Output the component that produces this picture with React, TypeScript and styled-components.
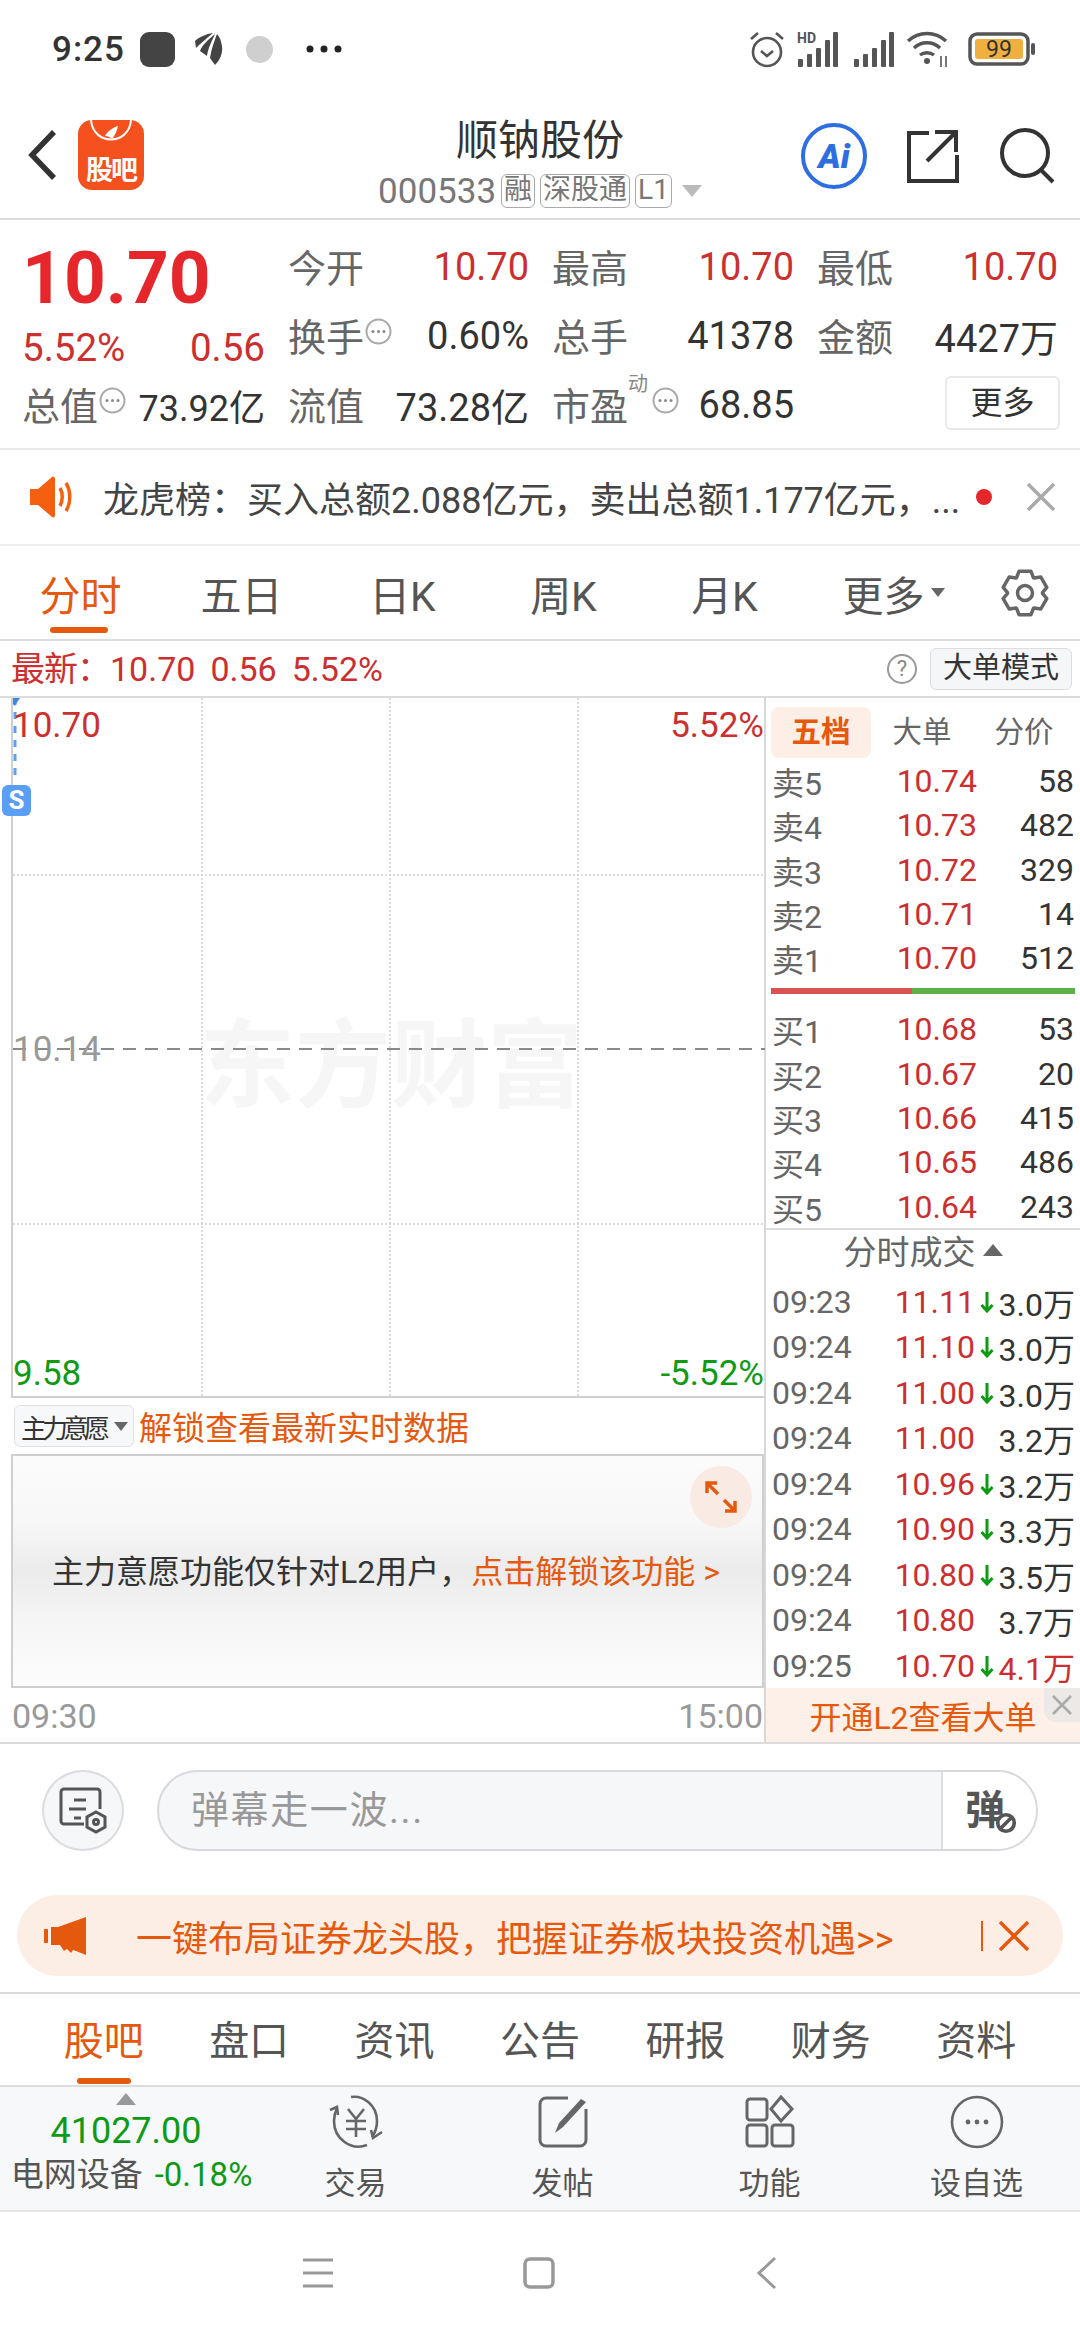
import React from 'react';
import styled, { createGlobalStyle } from 'styled-components';

const RED = '#cc2f2f';
const GREEN = '#0f9a14';
const ORANGE = '#e5590f';
const LINE = '#dcdcdc';

const GlobalStyle = createGlobalStyle`
  html, body {
    margin: 0;
    padding: 0;
    background: #fff;
  }
  * {
    box-sizing: border-box;
  }
  body {
    font-family: Roboto, "Noto Sans CJK SC", sans-serif;
    color: #333;
  }
`;

const Page = styled.div`
  width: 1080px;
  height: 2340px;
  overflow: hidden;
  background: #fff;
`;

/* status bar */
const StatusBar = styled.div`
  height: 96px;
  padding: 2px 44px 0 52px;
  display: flex;
  align-items: center;
  justify-content: space-between;
`;

const StatusLeft = styled.div`
  display: flex;
  align-items: center;
`;

const StatusTime = styled.span`
  font-size: 35px;
  font-weight: 500;
  letter-spacing: 1px;
  color: #333;
  width: 88px;
`;

const AppDot = styled.span`
  width: 35px;
  height: 35px;
  border-radius: 9px;
  background: #444;
  margin-right: 20px;
`;

const GreyDot = styled.span`
  width: 27px;
  height: 27px;
  border-radius: 50%;
  background: #cfcfcf;
  margin: 0 33px 0 23px;
`;

const StatusRight = styled.div`
  display: flex;
  align-items: center;
  gap: 14px;
`;

const AlarmIcon = styled.svg`
  margin-right: -3px;
`;

const WifiIcon = styled.svg`
  margin: 0 4px 0 -3px;
`;

/* navigation */
const NavBar = styled.div`
  height: 124px;
  padding: 14px 24px 0 28px;
  border-bottom: 2px solid ${LINE};
  display: flex;
  align-items: flex-start;
`;

const NavLeft = styled.div`
  width: 270px;
  padding-top: 10px;
  display: flex;
  align-items: center;
  gap: 22px;
`;

const LogoBox = styled.div`
  width: 66px;
  height: 70px;
  border-radius: 14px;
  background: #f4511e;
  color: #fff;
  display: flex;
  flex-direction: column;
  align-items: center;
  justify-content: flex-end;
  position: relative;
  overflow: hidden;
  font-size: 27px;
  line-height: 38px;
  font-weight: 700;
  letter-spacing: -2px;
`;

const LogoArc = styled.svg`
  position: absolute;
  top: 0;
  left: 0;
`;

const NavCenter = styled.div`
  flex: 1;
  display: flex;
  flex-direction: column;
  align-items: center;
  margin-left: -19px;
`;

const Title = styled.div`
  font-size: 42px;
  line-height: 62px;
  color: #333;
`;

const SubTitle = styled.div`
  display: flex;
  align-items: center;
  gap: 5px;
  height: 38px;
  font-size: 35px;
  color: #777;
`;

const Badge = styled.span`
  height: 34px;
  padding: 0 2px;
  border: 1.5px solid #aaa;
  border-radius: 6px;
  font-size: 28px;
  line-height: 30px;
  color: #777;
`;

const Triangle = styled.span<{ $up?: boolean; $size?: number; $color?: string; $gap?: number }>`
  display: inline-block;
  width: 0;
  height: 0;
  margin-left: ${(p) => p.$gap ?? 0}px;
  border-left: ${(p) => p.$size ?? 10}px solid transparent;
  border-right: ${(p) => p.$size ?? 10}px solid transparent;
  ${(p) => (p.$up ? 'border-bottom' : 'border-top')}: ${(p) => (p.$size ?? 10) + 2}px solid ${(p) => p.$color ?? '#bbb'};
`;

const NavRight = styled.div`
  display: flex;
  align-items: center;
  gap: 40px;
  padding-top: 13px;
  padding-right: 1px;
`;

const AiBadge = styled.div`
  width: 66px;
  height: 66px;
  border-radius: 50%;
  border: 4px solid #2d6ee0;
  color: #2d6ee0;
  font-size: 34px;
  font-weight: 900;
  font-style: italic;
  display: flex;
  align-items: center;
  justify-content: center;
`;

/* quote */
const Quote = styled.div`
  height: 230px;
  padding: 12px 23px 0 22px;
  border-bottom: 2px solid #eaeaea;
  display: grid;
  grid-template-columns: 243px 241px 242px 241px;
  grid-auto-rows: 69px;
  column-gap: 23px;
`;

const PriceBlock = styled.div`
  grid-row: span 2;
  display: flex;
  flex-direction: column;
`;

const BigPrice = styled.div`
  font-size: 73px;
  line-height: 92px;
  font-weight: 700;
  color: #e5262b;
`;

const PriceSub = styled.div`
  display: flex;
  justify-content: space-between;
  font-size: 38.5px;
  line-height: 44px;
  margin-top: 2px;
  color: ${RED};
`;

const Cell = styled.div`
  display: flex;
  align-items: center;
  justify-content: space-between;
  font-size: 38px;
  position: relative;
`;

const CellLabel = styled.span`
  display: flex;
  align-items: center;
  margin-top: -3px;
  color: #666;
`;

const CellValue = styled.span<{ $red?: boolean }>`
  color: ${(p) => (p.$red ? RED : '#333')};
`;

const ValueSmall = styled(CellValue)`
  font-size: 36px;
`;

const InfoIcon = styled.svg<{ $gap?: number }>`
  margin-left: ${(p) => p.$gap ?? 1}px;
  margin-top: -6px;
`;

const Superscript = styled.span`
  position: absolute;
  left: 76px;
  top: -2px;
  font-size: 20px;
  color: #888;
`;

const MoreButton = styled.div`
  grid-column: 4;
  justify-self: end;
  align-self: start;
  width: 115px;
  height: 54px;
  margin: 6px -2px 0 0;
  border: 2px solid #e8e8e8;
  border-radius: 6px;
  font-size: 32px;
  line-height: 50px;
  text-align: center;
  color: #333;
`;

/* notice */
const Notice = styled.div`
  height: 96px;
  padding: 0 24px 0 30px;
  border-bottom: 2px solid #eee;
  display: flex;
  align-items: center;
`;

const NoticeText = styled.div`
  flex: 1;
  margin-left: 31px;
  font-size: 36px;
  color: #444;
  white-space: nowrap;
`;

const RedPoint = styled.span`
  width: 16px;
  height: 16px;
  border-radius: 50%;
  background: #e5262b;
  margin-right: 34px;
`;

/* period tabs */
const PeriodTabs = styled.div`
  height: 95px;
  border-bottom: 2px solid ${LINE};
  display: flex;
  align-items: center;
  position: relative;
`;

const PeriodTab = styled.div<{ $active?: boolean; $shift?: number }>`
  width: 161px;
  height: 93px;
  margin-left: ${(p) => p.$shift ?? 0}px;
  display: flex;
  align-items: center;
  justify-content: center;
  gap: 6px;
  font-size: 41px;
  color: ${(p) => (p.$active ? ORANGE : '#555')};
  position: relative;
  ${(p) =>
    p.$active &&
    `&::after {
      content: '';
      position: absolute;
      left: 50px;
      bottom: 6px;
      width: 58px;
      height: 6px;
      border-radius: 3px;
      background: ${ORANGE};
    }`}
`;

const GearWrap = styled.div`
  margin-left: 26px;
  display: flex;
`;

/* latest row */
const LatestRow = styled.div`
  height: 57px;
  padding: 0 8px 0 11px;
  border-bottom: 2px solid ${LINE};
  display: flex;
  align-items: center;
  color: ${RED};
`;

const LatestValues = styled.div`
  flex: 1;
  display: flex;
  align-items: baseline;
  gap: 15px;
  font-size: 34px;
  line-height: 44px;
`;

const LatestLabel = styled.span`
  letter-spacing: -1px;
  margin-right: -15px;
`;

const HelpIcon = styled.span`
  width: 30px;
  height: 30px;
  border: 2px solid #999;
  border-radius: 50%;
  color: #888;
  font-size: 22px;
  line-height: 26px;
  text-align: center;
  margin-right: 13px;
`;

const ModeButton = styled.div`
  width: 142px;
  height: 42px;
  background: #f5f6f8;
  border: 1.5px solid #ddd;
  border-radius: 6px;
  font-size: 29px;
  line-height: 38px;
  text-align: center;
  color: #333;
`;

/* main */
const Main = styled.div`
  height: 1046px;
  border-bottom: 2px solid ${LINE};
  display: grid;
  grid-template-columns: 764px 316px;
`;

const LeftCol = styled.div`
  padding-left: 11px;
  display: flex;
  flex-direction: column;
`;

const Chart = styled.div`
  height: 700px;
  border-left: 2px solid #cfcfcf;
  border-bottom: 2px solid #cfcfcf;
  display: flex;
  flex-direction: column;
  justify-content: space-between;
  position: relative;
  font-size: 35px;
`;

const ChartGrid = styled.svg`
  position: absolute;
  left: 0;
  top: 0;
`;

const Watermark = styled.div`
  position: absolute;
  left: 186px;
  top: 290px;
  font-size: 96px;
  font-weight: 700;
  color: #f6f6f6;
  white-space: nowrap;
`;

const ChartRow = styled.div<{ $color: string; $pad?: string }>`
  position: relative;
  display: flex;
  justify-content: space-between;
  padding: ${(p) => p.$pad ?? '0'};
  line-height: 42px;
  color: ${(p) => p.$color};
`;

const SignalBadge = styled.div`
  position: absolute;
  left: -11px;
  top: 87px;
  width: 29px;
  height: 31px;
  border-radius: 6px;
  background: #5a9ff5;
  color: #fff;
  font-size: 26px;
  font-weight: 700;
  line-height: 31px;
  text-align: center;
`;

const SubRow = styled.div`
  height: 56px;
  padding-left: 3px;
  display: flex;
  align-items: center;
  gap: 5px;
  font-size: 33px;
  color: ${ORANGE};
  white-space: nowrap;
`;

const Selector = styled.div`
  width: 120px;
  height: 42px;
  background: #f7f8fa;
  border: 1.5px solid #e2e2e2;
  border-radius: 6px;
  padding-left: 6px;
  display: flex;
  align-items: center;
  gap: 9px;
  font-size: 26px;
  letter-spacing: -5px;
  color: #333;
  white-space: nowrap;
`;

const LockPanel = styled.div`
  height: 234px;
  border: 2px solid #cfcfcf;
  background: linear-gradient(180deg, #fbfbfb 0%, #f7f7f7 30%, #ebebeb 50%, #f5f5f5 70%, #fcfcfc 100%);
  display: flex;
  align-items: center;
  padding: 0 0 4px 39px;
  font-size: 32px;
  color: #333;
  white-space: nowrap;
  position: relative;
`;

const LockLink = styled.span`
  color: ${ORANGE};
`;

const ExpandButton = styled.div`
  position: absolute;
  right: 10px;
  top: 10px;
  width: 62px;
  height: 62px;
  border-radius: 50%;
  background: #f9ebe3;
  display: flex;
  align-items: center;
  justify-content: center;
`;

const TimeAxis = styled.div`
  height: 54px;
  padding: 2px 1px 0;
  display: flex;
  align-items: center;
  justify-content: space-between;
  font-size: 34px;
  color: #999;
`;

const RightCol = styled.div`
  border-left: 2px solid #d8d8d8;
  display: flex;
  flex-direction: column;
`;

const BookTabs = styled.div`
  height: 60px;
  padding: 9px 0 0 5px;
  display: flex;
  align-items: center;
`;

const BookTab = styled.div<{ $active?: boolean }>`
  width: ${(p) => (p.$active ? 100 : 102)}px;
  height: 51px;
  border-radius: 8px;
  background: ${(p) => (p.$active ? '#fdeee6' : 'transparent')};
  color: ${(p) => (p.$active ? ORANGE : '#666')};
  font-weight: ${(p) => (p.$active ? 700 : 400)};
  font-size: 29.5px;
  line-height: 51px;
  text-align: center;
`;

const BookRow = styled.div`
  height: 44.3px;
  padding: 0 6px 0 6px;
  display: grid;
  grid-template-columns: 70px 135px 1fr;
  align-items: center;
  font-size: 32px;
`;

const Grey = styled.span`
  color: #666;
`;

const Price = styled.span`
  color: ${RED};
  text-align: right;
`;

const Vol = styled.span`
  color: #333;
  text-align: right;
`;

const RatioBar = styled.div`
  height: 6px;
  margin: 9px 5px 12px 5px;
  display: flex;
`;

const RatioPart = styled.span<{ $color: string; $width: number }>`
  width: ${(p) => p.$width}px;
  background: ${(p) => p.$color};
`;

const TradeHeader = styled.div`
  height: 51px;
  padding-bottom: 8px;
  border-top: 2px solid ${LINE};
  display: flex;
  align-items: center;
  justify-content: center;
  gap: 7px;
  font-size: 33px;
  color: #666;
`;

const TradeRow = styled.div`
  height: 45.5px;
  padding: 0 5px 0 6px;
  display: grid;
  grid-template-columns: 120px 83px 1fr;
  align-items: center;
  font-size: 32px;
`;

const TradeVol = styled.span<{ $red?: boolean }>`
  display: flex;
  align-items: center;
  justify-content: flex-end;
  white-space: nowrap;
  color: ${(p) => (p.$red ? RED : '#333')};
`;

const ArrowSlot = styled.span`
  width: 23px;
  margin-left: -2px;
  display: flex;
  justify-content: center;
`;

const L2Banner = styled.div`
  flex: 1;
  background: #fdf0e8;
  color: ${ORANGE};
  font-size: 32px;
  display: flex;
  align-items: center;
  justify-content: center;
  position: relative;
`;

const CornerClose = styled.div`
  position: absolute;
  right: 0;
  top: 0;
  width: 36px;
  height: 34px;
  background: #ece9e6;
  border-bottom-left-radius: 12px;
  display: flex;
  align-items: center;
  justify-content: center;
`;

/* comment input */
const InputSection = styled.div`
  padding: 26px 17px 16px 17px;
  border-bottom: 2px solid ${LINE};
`;

const InputRow = styled.div`
  display: flex;
  align-items: center;
  height: 81px;
  padding: 0 25px;
  gap: 33px;
  margin-bottom: 44px;
`;

const RoundIcon = styled.div`
  width: 82px;
  height: 81px;
  border-radius: 50%;
  background: #f6f7f9;
  border: 2px solid #dcdce0;
  display: flex;
  align-items: center;
  justify-content: center;
`;

const InputBox = styled.div`
  flex: 1;
  height: 81px;
  border: 2px solid #d8d8de;
  border-radius: 41px;
  background: #f6f7f9;
  display: flex;
  overflow: hidden;
`;

const Placeholder = styled.div`
  flex: 1;
  padding-left: 32px;
  font-size: 38px;
  line-height: 77px;
  letter-spacing: 1.6px;
  color: #999;
`;

const SendBox = styled.div`
  width: 95px;
  background: #fff;
  border-left: 2px solid #dedede;
  padding: 4px 0 0 22px;
  font-size: 40px;
  line-height: 70px;
  font-weight: 700;
  color: #555;
  position: relative;
`;

const SendBan = styled.svg`
  position: absolute;
  left: 52px;
  top: 40px;
`;

const AdBanner = styled.div`
  height: 81px;
  border-radius: 41px;
  background: #fdeee5;
  padding: 0 0 0 27px;
  display: flex;
  align-items: center;
  font-size: 36px;
  color: ${ORANGE};
`;

const AdText = styled.div`
  margin-left: 50px;
  width: 845px;
  white-space: nowrap;
`;

const AdDivider = styled.span`
  width: 2px;
  height: 30px;
  background: ${ORANGE};
  margin-right: 15px;
`;

/* section tabs */
const SectionTabs = styled.div`
  height: 93px;
  padding: 0 31px;
  border-bottom: 2px solid ${LINE};
  display: grid;
  grid-template-columns: repeat(7, 1fr);
`;

const SectionTab = styled.div<{ $active?: boolean }>`
  font-size: 40px;
  line-height: 96px;
  text-align: center;
  color: ${(p) => (p.$active ? ORANGE : '#555')};
  position: relative;
  ${(p) =>
    p.$active &&
    `&::after {
      content: '';
      position: absolute;
      left: 46px;
      bottom: 6px;
      width: 54px;
      height: 6px;
      border-radius: 3px;
      background: ${ORANGE};
    }`}
`;

/* toolbar */
const Toolbar = styled.div`
  height: 125px;
  background: #f7f8fa;
  border-bottom: 2px solid #e6e6e6;
  display: grid;
  grid-template-columns: 252px repeat(4, 207px);
`;

const IndexBlock = styled.div`
  display: flex;
  flex-direction: column;
  align-items: center;
  padding-top: 6px;
`;

const IndexValue = styled.div`
  margin-top: 4px;
  font-size: 36px;
  line-height: 44px;
  color: ${GREEN};
`;

const IndexLine = styled.div`
  display: flex;
  gap: 12px;
  padding-left: 11px;
  font-size: 33px;
  line-height: 44px;
  color: #555;
  white-space: nowrap;
`;

const IndexPct = styled.span`
  color: ${GREEN};
`;

const ToolItem = styled.div`
  display: flex;
  flex-direction: column;
  align-items: center;
  padding-top: 8px;
  font-size: 31px;
  line-height: 44px;
  color: #555;
  gap: 13px;
`;

const ToolIcon = styled.svg`
  display: block;
`;

/* system nav */
const SystemNav = styled.div`
  height: 128px;
  padding: 0 0 6px 301px;
  display: grid;
  grid-template-columns: 222px 233px 22px;
  align-items: center;
`;

const sell = [
  ['卖5', '10.74', '58'],
  ['卖4', '10.73', '482'],
  ['卖3', '10.72', '329'],
  ['卖2', '10.71', '14'],
  ['卖1', '10.70', '512'],
];

const buy = [
  ['买1', '10.68', '53'],
  ['买2', '10.67', '20'],
  ['买3', '10.66', '415'],
  ['买4', '10.65', '486'],
  ['买5', '10.64', '243'],
];

const trades: [string, string, boolean, string, boolean?][] = [
  ['09:23', '11.11', true, '3.0万'],
  ['09:24', '11.10', true, '3.0万'],
  ['09:24', '11.00', true, '3.0万'],
  ['09:24', '11.00', false, '3.2万'],
  ['09:24', '10.96', true, '3.2万'],
  ['09:24', '10.90', true, '3.3万'],
  ['09:24', '10.80', true, '3.5万'],
  ['09:24', '10.80', false, '3.7万'],
  ['09:25', '10.70', true, '4.1万', true],
];

// six tooth gear outline, same shape as the app's settings icon
const gearPath = () => {
  const pts: string[] = [];
  for (let i = 0; i < 6; i++) {
    const a = (i * Math.PI) / 3 - Math.PI / 2;
    [
      [17.5, -0.5],
      [22.5, -0.27],
      [22.5, 0.27],
      [17.5, 0.5],
    ].forEach(([r, d]) => {
      pts.push(`${(25 + r * Math.cos(a + d)).toFixed(1)} ${(25 + r * Math.sin(a + d)).toFixed(1)}`);
    });
  }
  return `M${pts.join('L')}Z`;
};

const Signal = ({ hd }: { hd?: boolean }) => (
  <svg width="42" height="36" viewBox="0 0 42 36" fill="#555">
    <rect x="1" y="28" width="5" height="8" rx="1" />
    <rect x="10" y="23" width="5" height="13" rx="1" />
    <rect x="19" y="17" width="5" height="19" rx="1" />
    <rect x="28" y="9" width="5" height="27" rx="1" />
    <rect x="36" y="1" width="5" height="35" rx="1" />
    {hd && (
      <text x="0" y="12" fontSize="14" fontWeight="700" fontFamily="Roboto">
        HD
      </text>
    )}
  </svg>
);

const DownArrow = () => (
  <svg width="14" height="24" viewBox="0 0 14 24" fill="none" stroke={GREEN} strokeWidth="3">
    <path d="M7 2v19M1.5 15 7 21l5.5-6" />
  </svg>
);

const Info = ({ gap }: { gap?: number }) => (
  <InfoIcon $gap={gap} width="27" height="27" viewBox="0 0 27 27" fill="none">
    <circle cx="13.5" cy="13.5" r="12" stroke="#aaa" strokeWidth="2" />
    <circle cx="8" cy="13.5" r="1.500" fill="#888" />
    <circle cx="13.500" cy="13.5" r="1.500" fill="#888" />
    <circle cx="19" cy="13.5" r="1.500" fill="#888" />
  </InfoIcon>
);

export default function App() {
  return (
    <Page>
      <GlobalStyle />
      <StatusBar>
        <StatusLeft>
          <StatusTime>9:25</StatusTime>
          <AppDot />
          <svg width="28" height="34" viewBox="0 0 28 34" fill="#444">
            <path d="M18 1C11 2 4 5 0 9l1 7c4-4 10-9 17-15z" />
            <path d="M20 2C14 7 7 13 5 19l7 5c1-8 5-15 8-22z" />
            <path d="M22 2c-3 8-6 16-7 24l5 7c5-5 8-12 7-19-1-5-2-9-5-12z" />
          </svg>
          <GreyDot />
          <svg width="36" height="8" viewBox="0 0 36 8" fill="#222">
            <circle cx="4" cy="4" r="3.5" />
            <circle cx="18" cy="4" r="3.5" />
            <circle cx="32" cy="4" r="3.5" />
          </svg>
        </StatusLeft>
        <StatusRight>
          <AlarmIcon width="38" height="38" viewBox="0 0 38 38" fill="none" stroke="#555" strokeWidth="2.6">
            <circle cx="19" cy="22" r="14" />
            <path d="M13 21l6 5 6-5M3 9l7-6M35 9l-7-6" />
          </AlarmIcon>
          <Signal hd />
          <Signal />
          <WifiIcon width="44" height="38" viewBox="0 0 44 38" fill="none" stroke="#555" strokeWidth="3.4">
            <path d="M2 11c11-10 27-10 38 0M8 18c7-7 19-7 26 0M14 25c4-3 10-3 14 0" />
            <circle cx="21" cy="31" r="3" fill="#555" stroke="none" />
            <path d="M35 26v11M40 26v11" strokeWidth="1.6" />
          </WifiIcon>
          <svg width="68" height="36" viewBox="0 0 68 36">
            <rect x="2" y="3" width="58" height="30" rx="7" fill="#fff" stroke="#555" strokeWidth="3.5" />
            <rect x="7" y="8" width="48" height="20" rx="3" fill="#f0b040" />
            <rect x="63" y="12" width="4" height="12" rx="2" fill="#555" />
            <text x="31" y="26" textAnchor="middle" fontSize="23" fontFamily="Roboto" fill="#333">
              99
            </text>
          </svg>
        </StatusRight>
      </StatusBar>

      <NavBar>
        <NavLeft>
          <svg width="28" height="50" viewBox="0 0 28 50" fill="none" stroke="#333" strokeWidth="5.5">
            <path d="M26 2 4 25l22 23" />
          </svg>
          <LogoBox>
            <LogoArc width="66" height="30" viewBox="0 0 66 30" fill="none">
              <path d="M13 0c2 26 38 26 40 0" stroke="#fff" strokeWidth="2" />
              <path d="M40 6c-6 2-11 6-13 10 3 0 5 1 7 3 3-4 5-8 6-13z" fill="#fff" />
            </LogoArc>
            股吧
          </LogoBox>
        </NavLeft>
        <NavCenter>
          <Title>顺钠股份</Title>
          <SubTitle>
            000533
            <Badge>融</Badge>
            <Badge>深股通</Badge>
            <Badge>L1</Badge>
            <Triangle $size={10} $gap={5} />
          </SubTitle>
        </NavCenter>
        <NavRight>
          <AiBadge>Ai</AiBadge>
          <svg width="52" height="54" viewBox="0 0 52 54" fill="none" stroke="#333" strokeWidth="4">
            <path d="M22 4H2v48h48V26" />
            <path d="M20 32 48 4M28 3h21v20" />
          </svg>
          <svg width="56" height="56" viewBox="0 0 56 56" fill="none" stroke="#333" strokeWidth="4">
            <circle cx="26" cy="25" r="23" />
            <path d="m42 42 12 12" />
          </svg>
        </NavRight>
      </NavBar>

      <Quote>
        <PriceBlock>
          <BigPrice>10.70</BigPrice>
          <PriceSub>
            <span>5.52%</span>
            <span>0.56</span>
          </PriceSub>
        </PriceBlock>
        <Cell>
          <CellLabel>今开</CellLabel>
          <CellValue $red>10.70</CellValue>
        </Cell>
        <Cell>
          <CellLabel>最高</CellLabel>
          <CellValue $red>10.70</CellValue>
        </Cell>
        <Cell>
          <CellLabel>最低</CellLabel>
          <CellValue $red>10.70</CellValue>
        </Cell>
        <Cell>
          <CellLabel>
            换手
            <Info />
          </CellLabel>
          <CellValue>0.60%</CellValue>
        </Cell>
        <Cell>
          <CellLabel>总手</CellLabel>
          <CellValue>41378</CellValue>
        </Cell>
        <Cell>
          <CellLabel>金额</CellLabel>
          <CellValue>4427万</CellValue>
        </Cell>
        <Cell>
          <CellLabel>
            总值
            <Info />
          </CellLabel>
          <ValueSmall>73.92亿</ValueSmall>
        </Cell>
        <Cell>
          <CellLabel>流值</CellLabel>
          <CellValue>73.28亿</CellValue>
        </Cell>
        <Cell>
          <CellLabel>
            市盈
            <Superscript>动</Superscript>
            <Info gap={24} />
          </CellLabel>
          <CellValue>68.85</CellValue>
        </Cell>
        <MoreButton>更多</MoreButton>
      </Quote>

      <Notice>
        <svg width="42" height="44" viewBox="0 0 42 44" fill="#f4600f">
          <path d="M0 14h8L22 2c2-1 3 0 3 2v36c0 2-1 3-3 2L8 30H0z" />
          <path d="M30 13c3 5 3 13 0 18M36 8c5 8 5 20 0 28" fill="none" stroke="#f4600f" strokeWidth="3.5" />
        </svg>
        <NoticeText>龙虎榜：买入总额2.088亿元，卖出总额1.177亿元，...</NoticeText>
        <RedPoint />
        <svg width="30" height="30" viewBox="0 0 30 30" fill="none" stroke="#aaa" strokeWidth="3.5">
          <path d="m2 2 26 26M28 2 2 28" />
        </svg>
      </Notice>

      <PeriodTabs>
        <PeriodTab $active>分时</PeriodTab>
        <PeriodTab>五日</PeriodTab>
        <PeriodTab>日K</PeriodTab>
        <PeriodTab>周K</PeriodTab>
        <PeriodTab>月K</PeriodTab>
        <PeriodTab $shift={8}>
          更多
          <Triangle $size={7} $color="#666" />
        </PeriodTab>
        <GearWrap>
          <svg width="50" height="50" viewBox="0 0 50 50" fill="none" stroke="#666" strokeWidth="3.5">
            <path d={gearPath()} strokeLinejoin="round" />
            <circle cx="25" cy="25" r="7.500" />
          </svg>
        </GearWrap>
      </PeriodTabs>

      <LatestRow>
        <LatestValues>
          <LatestLabel>最新：</LatestLabel>
          <span>10.70</span>
          <span>0.56</span>
          <span>5.52%</span>
        </LatestValues>
        <HelpIcon>?</HelpIcon>
        <ModeButton>大单模式</ModeButton>
      </LatestRow>

      <Main>
        <LeftCol>
          <Chart>
            <Watermark>东方财富</Watermark>
            <ChartGrid width="752" height="698" viewBox="0 0 752 698" fill="none">
              <g stroke="#cfcfcf" strokeWidth="1.5" strokeDasharray="2 2">
                <path d="M189 0v698M377 0v698M565 0v698M0 177h752M0 526h752" />
              </g>
              <path d="M0 351h752" stroke="#8a8a8a" strokeWidth="2" strokeDasharray="13 9" />
              <path d="M2 0v80" stroke="#5a9ff5" strokeWidth="3" strokeDasharray="7 7" />
              <path d="M-4 0h11l-5.500 8z" fill="#3b86ee" />
            </ChartGrid>
            <ChartRow $color={RED} $pad="7px 0 0 0">
              <span>10.70</span>
              <span>5.52%</span>
            </ChartRow>
            <ChartRow $color="#999">
              <span>10.14</span>
            </ChartRow>
            <ChartRow $color={GREEN} $pad="0 0 1px 0">
              <span>9.58</span>
              <span>-5.52%</span>
            </ChartRow>
            <SignalBadge>S</SignalBadge>
          </Chart>
          <SubRow>
            <Selector>
              主力意愿
              <Triangle $size={7} $color="#666" />
            </Selector>
            解锁查看最新实时数据
          </SubRow>
          <LockPanel>
            主力意愿功能仅针对L2用户，
            <LockLink>点击解锁该功能 &gt;</LockLink>
            <ExpandButton>
              <svg width="32" height="32" viewBox="0 0 32 32" fill="none" stroke={ORANGE} strokeWidth="3.5">
                <path d="M2 12V2h10M2 2l11 11M30 20v10H20M30 30 19 19" />
              </svg>
            </ExpandButton>
          </LockPanel>
          <TimeAxis>
            <span>09:30</span>
            <span>15:00</span>
          </TimeAxis>
        </LeftCol>

        <RightCol>
          <BookTabs>
            <BookTab $active>五档</BookTab>
            <BookTab>大单</BookTab>
            <BookTab>分价</BookTab>
          </BookTabs>
          {sell.map((r) => (
            <BookRow key={r[0]}>
              <Grey>{r[0]}</Grey>
              <Price>{r[1]}</Price>
              <Vol>{r[2]}</Vol>
            </BookRow>
          ))}
          <RatioBar>
            <RatioPart $color="#d9534f" $width={141} />
            <RatioPart $color="#5fb04a" $width={163} />
          </RatioBar>
          {buy.map((r) => (
            <BookRow key={r[0]}>
              <Grey>{r[0]}</Grey>
              <Price>{r[1]}</Price>
              <Vol>{r[2]}</Vol>
            </BookRow>
          ))}
          <TradeHeader>
            分时成交
            <Triangle $up $size={10} $color="#666" />
          </TradeHeader>
          {trades.map((t, i) => (
            <TradeRow key={i}>
              <Grey>{t[0]}</Grey>
              <Price>{t[1]}</Price>
              <TradeVol $red={t[4]}>
                <ArrowSlot>{t[2] && <DownArrow />}</ArrowSlot>
                {t[3]}
              </TradeVol>
            </TradeRow>
          ))}
          <L2Banner>
            开通L2查看大单
            <CornerClose>
              <svg width="22" height="22" viewBox="0 0 22 22" fill="none" stroke="#aaa" strokeWidth="2.5">
                <path d="m2 2 18 18M20 2 2 20" />
              </svg>
            </CornerClose>
          </L2Banner>
        </RightCol>
      </Main>

      <InputSection>
        <InputRow>
          <RoundIcon>
            <svg width="48" height="48" viewBox="0 0 48 48" fill="none" stroke="#555" strokeWidth="3">
              <path d="M25 37H5a3 3 0 0 1-3-3V5a3 3 0 0 1 3-3h33a3 3 0 0 1 3 3v17" />
              <path d="M15 13h12M10 22h17M15 31h7" />
              <path d="m37 25 9 5v10l-9 5-9-5V30z" />
              <circle cx="37" cy="35" r="2.500" />
            </svg>
          </RoundIcon>
          <InputBox>
            <Placeholder>弹幕走一波...</Placeholder>
            <SendBox>
              弹
              <SendBan width="22" height="22" viewBox="0 0 24 24" fill="#fff" stroke="#555" strokeWidth="4">
                <circle cx="12" cy="12" r="9" />
                <path d="m6 18 12-12" />
              </SendBan>
            </SendBox>
          </InputBox>
        </InputRow>
        <AdBanner>
          <svg width="42" height="38" viewBox="0 0 42 38" fill={ORANGE}>
            <path d="M0 12h4v14H0zM7 10h7L42 0v38l-10-4-3-1-2 3-4-4-3 2-4-6H7z" />
          </svg>
          <AdText>一键布局证券龙头股，把握证券板块投资机遇&gt;&gt;</AdText>
          <AdDivider />
          <svg width="32" height="32" viewBox="0 0 32 32" fill="none" stroke={ORANGE} strokeWidth="3.5">
            <path d="m2 2 28 28M30 2 2 30" />
          </svg>
        </AdBanner>
      </InputSection>

      <SectionTabs>
        <SectionTab $active>股吧</SectionTab>
        <SectionTab>盘口</SectionTab>
        <SectionTab>资讯</SectionTab>
        <SectionTab>公告</SectionTab>
        <SectionTab>研报</SectionTab>
        <SectionTab>财务</SectionTab>
        <SectionTab>资料</SectionTab>
      </SectionTabs>

      <Toolbar>
        <IndexBlock>
          <Triangle $up $size={10} $color="#999" />
          <IndexValue>41027.00</IndexValue>
          <IndexLine>
            电网设备
            <IndexPct>-0.18%</IndexPct>
          </IndexLine>
        </IndexBlock>
        <ToolItem>
          <ToolIcon width="58" height="54" viewBox="0 0 58 54" fill="none" stroke="#666" strokeWidth="2.6">
            <path d="M24 2c12-2 26 8 26 24 0 6-2 12-5 16" />
            <path d="M40 50C24 56 7 44 7 26c0-4 1-9 3-13" />
            <path d="M3 15l7-3 1 8M55 37l-9 6-2-8" />
            <path d="M21 14l8 10 8-10M19 26h20M19 34h20M29 24v18" />
          </ToolIcon>
          交易
        </ToolItem>
        <ToolItem>
          <ToolIcon width="54" height="54" viewBox="0 0 54 54" fill="none" stroke="#666" strokeWidth="3">
            <path d="M32 3H10a6 6 0 0 0-6 6v36a6 6 0 0 0 6 6h34a6 6 0 0 0 6-6V14" />
            <path d="M19 38 23 28 45 4l5 3-23 25z" fill="#666" stroke="none" />
          </ToolIcon>
          发帖
        </ToolItem>
        <ToolItem>
          <ToolIcon width="54" height="54" viewBox="0 0 54 54" fill="none" stroke="#666" strokeWidth="3">
            <rect x="4" y="4" width="20" height="21" rx="3" />
            <path d="m38 2 11 12-11 12-10-12z" />
            <rect x="4" y="30" width="20" height="21" rx="3" />
            <rect x="29" y="30" width="21" height="21" rx="3" />
          </ToolIcon>
          功能
        </ToolItem>
        <ToolItem>
          <ToolIcon width="54" height="54" viewBox="0 0 54 54" fill="none" stroke="#666" strokeWidth="2.6">
            <circle cx="27" cy="27" r="25" />
            <circle cx="18" cy="27" r="2.400" fill="#666" stroke="none" />
            <circle cx="27" cy="27" r="2.400" fill="#666" stroke="none" />
            <circle cx="36" cy="27" r="2.400" fill="#666" stroke="none" />
          </ToolIcon>
          设自选
        </ToolItem>
      </Toolbar>

      <SystemNav>
        <svg width="34" height="30" viewBox="0 0 34 30" stroke="#999" strokeWidth="3">
          <path d="M2 2h30M2 15h30M2 28h30" />
        </svg>
        <svg width="32" height="32" viewBox="0 0 32 32" fill="none" stroke="#999" strokeWidth="3.5">
          <rect x="2" y="2" width="28" height="28" rx="5" />
        </svg>
        <svg width="22" height="34" viewBox="0 0 22 34" fill="none" stroke="#999" strokeWidth="3">
          <path d="M19 2 3 17l16 15" />
        </svg>
      </SystemNav>
    </Page>
  );
}
